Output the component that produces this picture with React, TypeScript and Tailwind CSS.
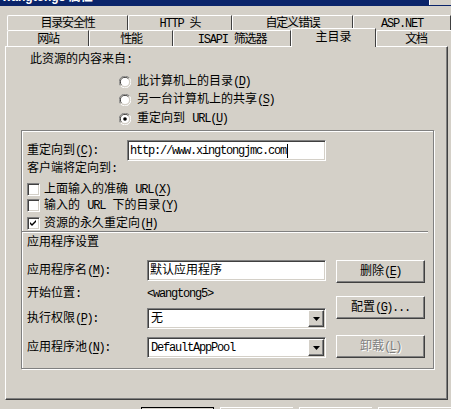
import type { ReactNode } from 'react'

const FONT = "font-['Liberation_Mono','Noto_Sans_CJK_SC',monospace]"

function Acc({ k }: { k: string }) {
  return (
    <span className="tracking-[-1.5px]">
      (<span className="underline underline-offset-2">{k}</span>)
    </span>
  )
}

function Latin({ children }: { children: ReactNode }) {
  return <span className="tracking-[-1.2px]">{children}</span>
}

function Radio({ checked }: { checked?: boolean }) {
  return (
    <svg width="12" height="12" viewBox="0 0 12 12" className="shrink-0">
      <path d="M10.5 2.2 A5.5 5.5 0 0 0 1.5 9.8" fill="none" stroke="#808080" strokeWidth="1" />
      <path d="M9.3 2.8 A4.4 4.4 0 0 0 2.6 9" fill="none" stroke="#404040" strokeWidth="1" />
      <circle cx="6" cy="6" r="4" fill="#fff" />
      <path d="M1.5 9.8 A5.5 5.5 0 0 0 10.5 2.2" fill="none" stroke="#fff" strokeWidth="1" />
      {checked && <circle cx="6" cy="6" r="1.8" fill="#000" />}
    </svg>
  )
}

function Check({ checked }: { checked?: boolean }) {
  return (
    <div className="w-[13px] h-[13px] shrink-0 bg-white border border-t-[#808080] border-l-[#808080] border-b-white border-r-white shadow-[inset_1px_1px_0_#404040,inset_-1px_-1px_0_#d4d0c8] flex items-center justify-center">
      {checked && (
        <svg width="7" height="7" viewBox="0 0 7 7">
          <path d="M0 2 L2 4 L6 0 L6 2 L2 6 L0 4 Z" fill="#000" />
        </svg>
      )}
    </div>
  )
}

function TextBox({ children, w }: { children: ReactNode; w: string }) {
  return (
    <div className={`${w} h-[21px] bg-white border border-t-[#808080] border-l-[#808080] border-b-white border-r-white shadow-[inset_1px_1px_0_#404040,inset_-1px_-1px_0_#d4d0c8] flex items-center px-[2px]`}>
      {children}
    </div>
  )
}

function Combo({ children }: { children: ReactNode }) {
  return (
    <div className="w-[179px] h-[21px] bg-white border border-t-[#808080] border-l-[#808080] border-b-white border-r-white shadow-[inset_1px_1px_0_#404040,inset_-1px_-1px_0_#d4d0c8] flex items-center pl-[3px] pr-[1px] py-[1px]">
      <div className="flex-1">{children}</div>
      <div className="w-[16px] h-[17px] bg-[#d4d0c8] border border-t-white border-l-white border-b-[#404040] border-r-[#404040] shadow-[inset_-1px_-1px_0_#808080] flex items-center justify-center">
        <svg width="7" height="4" viewBox="0 0 7 4">
          <path d="M0 0 H7 L3.5 4 Z" fill="#000" />
        </svg>
      </div>
    </div>
  )
}

function Button({ children, disabled, className = '' }: { children: ReactNode; disabled?: boolean; className?: string }) {
  return (
    <div
      className={`w-[89px] h-[23px] bg-[#d4d0c8] border border-t-white border-l-white border-b-[#404040] border-r-[#404040] shadow-[inset_-1px_-1px_0_#808080] flex items-center justify-center ${
        disabled ? 'text-[#808080] [text-shadow:1px_1px_0_#fff]' : ''
      } ${className}`}
    >
      {children}
    </div>
  )
}

const backTabs = [
  { label: '目录安全性', w: 'w-[121px]' },
  { label: 'HTTP 头', w: 'w-[104px]' },
  { label: '自定义错误', w: 'w-[121px]' },
  { label: 'ASP.NET', w: 'w-[98px]' },
]

const frontTabs = [
  { label: '网站', w: 'w-[82px]' },
  { label: '性能', w: 'w-[84px]' },
  { label: 'ISAPI 筛选器', w: 'w-[118px]' },
  { label: '主目录', w: 'w-[85px]', active: true },
  { label: '文档', w: 'w-[80px]' },
]

export default function App() {
  return (
    <div className={`w-[451px] h-[409px] overflow-hidden bg-[#d4d0c8] text-black text-[12px] leading-none ${FONT}`}>
      {/* title bar (only bottom edge visible) */}
      <div className="h-[6px] overflow-hidden bg-[#0a246a] flex">
        <div className="-mt-[10px] pl-[2px] text-white font-bold text-[12px] leading-[14px] font-['Liberation_Sans','Noto_Sans_CJK_SC',sans-serif] flex-1">
          wangtong5 属性
        </div>
        <div className="w-[22px] h-[5px] bg-[#d4d0c8] border-l border-l-white" />
      </div>

      {/* tabs, back row */}
      <div className="ml-[7px] mt-[9px] flex h-[15px]">
        {backTabs.map((t) => (
          <div
            key={t.label}
            className={`${t.w} shrink-0 h-full border-t border-l border-t-white border-l-white border-r border-r-[#404040] rounded-tl-[2px] flex items-start justify-center pt-[2px]`}
          >
            <Latin>{t.label}</Latin>
          </div>
        ))}
      </div>

      {/* tabs, front row */}
      <div className="ml-[7px] flex h-[16px]">
        {frontTabs.map((t) =>
          t.active ? (
            <div
              key={t.label}
              className={`${t.w} shrink-0 relative z-10 -mt-[2px] h-[19px] bg-[#d4d0c8] border-t border-l border-t-white border-l-white border-r border-r-[#404040] rounded-tl-[2px] flex items-start justify-center pt-[3px]`}
            >
              {t.label}
            </div>
          ) : (
            <div
              key={t.label}
              className={`${t.w} shrink-0 h-full border-t border-l border-t-white border-l-white border-r border-r-[#404040] rounded-tl-[2px] flex items-start justify-center pt-[3px]`}
            >
              <Latin>{t.label}</Latin>
            </div>
          )
        )}
      </div>

      {/* page panel */}
      <div className="ml-[5px] w-[443px] h-[354px] border border-t-white border-l-white border-b-[#404040] border-r-[#404040] shadow-[inset_-1px_-1px_0_#808080] flex flex-col">
        <div className="mt-[5px] h-[16px] pl-[24px] flex items-center">此资源的内容来自:</div>

        <div className="mt-[5px] flex flex-col pl-[113px]">
          <div className="h-[18px] flex items-center gap-[6px]">
            <Radio />
            <span>此计算机上的目录<Acc k="D" /></span>
          </div>
          <div className="h-[18px] flex items-center gap-[6px]">
            <Radio />
            <span>另一台计算机上的共享<Acc k="S" /></span>
          </div>
          <div className="mt-[1px] h-[18px] flex items-center gap-[6px]">
            <Radio checked />
            <span>重定向到 <Latin>URL</Latin><Acc k="U" /></span>
          </div>
        </div>

        {/* group box */}
        <div className="mt-[2px] ml-[15px] w-[413px] h-[239px] border border-[#808080] shadow-[inset_1px_1px_0_#fff,1px_1px_0_#fff] flex flex-col">
          <div className="mt-[9px] h-[21px] pl-[5px] flex items-center">
            <span className="w-[100px]">重定向到<Acc k="C" />:</span>
            <TextBox w="w-[199px]">
              <span className="tracking-[-1.2px]">http://www.xingtongjmc.com</span>
              <span className="w-px h-[14px] bg-black ml-[1px]" />
            </TextBox>
          </div>
          <div className="h-[15px] pl-[5px] flex items-center">客户端将定向到:</div>

          <div className="mt-[7px] h-[13px] pl-[5px] flex items-center gap-[4px]">
            <Check />
            <span>上面输入的准确 <Latin>URL</Latin><Acc k="X" /></span>
          </div>
          <div className="mt-[3px] h-[13px] pl-[5px] flex items-center gap-[4px]">
            <Check />
            <span>输入的 <Latin>URL</Latin> 下的目录<Acc k="Y" /></span>
          </div>
          <div className="mt-[5px] h-[13px] pl-[5px] flex items-center gap-[4px]">
            <Check checked />
            <span>资源的永久重定向<Acc k="H" /></span>
          </div>

          <div className="mt-[1px] mr-[5px] h-px bg-[#808080] shadow-[0_1px_0_#fff]" />

          <div className="mt-[3px] h-[16px] pl-[5px] flex items-center">应用程序设置</div>

          <div className="flex pl-[5px]">
            <div className="flex flex-col w-[299px]">
              <div className="mt-[9px] h-[21px] flex items-center">
                <span className="w-[120px]">应用程序名<Acc k="M" />:</span>
                <TextBox w="w-[179px]">默认应用程序</TextBox>
              </div>
              <div className="mt-[4px] h-[17px] flex items-center">
                <span className="w-[120px]">开始位置:</span>
                <Latin>&lt;wangtong5&gt;</Latin>
              </div>
              <div className="mt-[6px] h-[21px] flex items-center">
                <span className="w-[120px]">执行权限<Acc k="P" />:</span>
                <Combo>无</Combo>
              </div>
              <div className="mt-[8px] h-[21px] flex items-center">
                <span className="w-[120px]">应用程序池<Acc k="N" />:</span>
                <Combo>
                  <Latin>DefaultAppPool</Latin>
                </Combo>
              </div>
            </div>
            <div className="ml-[10px] flex flex-col">
              <Button className="mt-[9px]">
                删除<Acc k="E" />
              </Button>
              <Button className="mt-[13px]">
                配置<Acc k="G" /><Latin>...</Latin>
              </Button>
              <Button className="mt-[16px]" disabled>
                卸载<Acc k="L" />
              </Button>
            </div>
          </div>
        </div>
      </div>

      {/* dialog buttons, cut off by the window edge */}
      <div className="mt-[7px] ml-[141px] flex gap-[6px]">
        <div className="w-[75px] h-[23px] border border-black" />
        <div className="w-[75px] h-[23px] border-t border-l border-t-white border-l-white" />
        <div className="w-[75px] h-[23px] border-t border-l border-t-white border-l-white" />
        <div className="w-[75px] h-[23px] border-t border-l border-t-white border-l-white" />
      </div>
    </div>
  )
}
